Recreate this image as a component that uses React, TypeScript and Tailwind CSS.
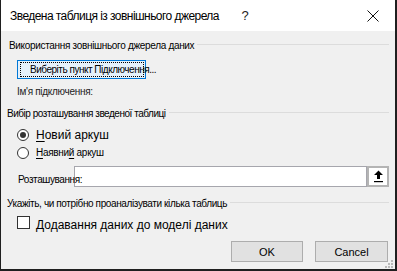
import React from "react";

function SectionHeader({ text, first, track }: { text: string; first?: boolean; track: string }) {
  return (
    <div className={`flex items-center h-[12px] ${first ? "pl-[2px]" : ""}`}>
      <span className={`text-[10px] leading-[12px] ${track} whitespace-nowrap text-black`}>{text}</span>
      <div className="flex-1 h-px bg-[#dcdcdc] ml-[3px] -translate-y-[2px]" />
    </div>
  );
}

export default function App() {
  return (
    <div className="relative w-[397px] h-[271px] bg-[#f0f0f0] border-l border-r-2 border-b-2 border-[#1f1f1f] flex flex-col overflow-hidden font-['Liberation_Sans',Arial,sans-serif] text-black">
      {/* Title bar */}
      <div className="h-[31px] bg-white flex items-center shrink-0">
        <span className="pl-[9px] text-[12px] tracking-[-0.55px] whitespace-nowrap leading-[16px]">
          Зведена таблиця із зовнішнього джерела
        </span>
        <span className="ml-auto w-[16px] text-center text-[13px] leading-[16px] text-[#222]">?</span>
        <span className="ml-[112px] mr-[14px] w-[16px] h-[16px] flex items-center justify-center">
          <svg width="12" height="12" viewBox="0 0 12 12">
            <path d="M0.5 0.5 L11.5 11.5 M11.5 0.5 L0.5 11.5" stroke="#111" strokeWidth="1" fill="none" />
          </svg>
        </span>
      </div>

      {/* Body */}
      <div className="flex-1 flex flex-col pl-[6px] pr-[6px]">
        <div className="mt-[9px]">
          <SectionHeader text="Використання зовнішнього джерела даних" first track="tracking-[-0.32px]" />
        </div>

        <div className="mt-[8px] ml-[10px] relative w-[129px] h-[19px] border border-[#0078d7] bg-[#e5f1fb] flex items-center">
          <div className="absolute left-[2px] right-[1px] top-[1px] bottom-[1px] border border-dotted border-black" />
          <span className="pl-[12px] text-[10px] leading-[12px] tracking-[-0.48px] whitespace-nowrap">
            Виберіть пункт Підключення...
          </span>
        </div>

        <div className="mt-[7px] pl-[10px] text-[10px] leading-[12px] tracking-[-0.3px] text-[#222]">
          Ім'я підключення:
        </div>

        <div className="mt-[10px]">
          <SectionHeader text="Вибір розташування зведеної таблиці" track="tracking-[-0.47px]" />
        </div>

        {/* Radio 1 */}
        <div className="mt-[7px] h-[16px] flex items-center pl-[10px]">
          <span className="w-[12px] h-[12px] rounded-full border border-[#333] bg-white flex items-center justify-center">
            <span className="w-[6px] h-[6px] rounded-full bg-[#333]" />
          </span>
          <span className="ml-[7px] text-[12px] leading-[16px] whitespace-nowrap">
            <span className="underline underline-offset-2">Н</span>овий аркуш
          </span>
        </div>

        {/* Radio 2 */}
        <div className="mt-[2px] h-[16px] flex items-center pl-[10px]">
          <span className="w-[12px] h-[12px] rounded-full border border-[#333] bg-white" />
          <span className="ml-[7px] text-[10px] leading-[14px] tracking-[-0.3px] whitespace-nowrap">
            <span className="underline underline-offset-2">Н</span>аявни<span className="underline underline-offset-2">й</span> аркуш
          </span>
        </div>

        {/* Location row */}
        <div className="mt-[5px] h-[21px] flex items-end">
          <span className="relative z-10 w-[67px] pl-[11px] pb-[1px] text-[10px] leading-[12px] tracking-[-0.4px] whitespace-nowrap">
            Розташування:
          </span>
          <div className="flex-1 h-[21px] bg-white border border-[#a6a6ad]" />
          <div className="w-[22px] h-[21px] border-2 border-[#b4b4b4] bg-white flex items-center justify-center">
            <svg width="11" height="13" viewBox="0 0 11 13">
              <path d="M5.5 0.5 L10 5 L7 5 L7 9 L4 9 L4 5 L1 5 Z" fill="#000" />
              <rect x="1" y="11" width="9" height="1.2" fill="#000" />
            </svg>
          </div>
        </div>

        <div className="mt-[11px]">
          <SectionHeader text="Укажіть, чи потрібно проаналізувати кілька таблиць" track="tracking-[-0.38px]" />
        </div>

        {/* Checkbox */}
        <div className="mt-[6px] flex items-start pl-[10px]">
          <span className="w-[13px] h-[13px] border border-[#333] bg-white shrink-0" />
          <span className="ml-[6px] mt-[1px] text-[12px] leading-[16px] whitespace-nowrap">
            Додавання даних до моделі даних
          </span>
        </div>

        {/* Buttons */}
        <div className="mt-auto mb-[7px] flex justify-end gap-[12px] pr-[1px]">
          <button className="w-[72px] h-[21px] bg-[#e1e1e1] border border-[#adadad] text-[11px] leading-[14px]">
            OK
          </button>
          <button className="w-[73px] h-[21px] bg-[#e1e1e1] border border-[#adadad] text-[11px] leading-[14px]">
            Cancel
          </button>
        </div>
      </div>

      {/* Resize grip */}
      <svg className="absolute right-[2px] bottom-[1px]" width="8" height="8" viewBox="0 0 8 8">
        <rect x="6" y="0" width="2" height="2" fill="#b8b8b8" />
        <rect x="3" y="3" width="2" height="2" fill="#b8b8b8" />
        <rect x="6" y="3" width="2" height="2" fill="#b8b8b8" />
        <rect x="0" y="6" width="2" height="2" fill="#b8b8b8" />
        <rect x="3" y="6" width="2" height="2" fill="#b8b8b8" />
        <rect x="6" y="6" width="2" height="2" fill="#b8b8b8" />
      </svg>
    </div>
  );
}
